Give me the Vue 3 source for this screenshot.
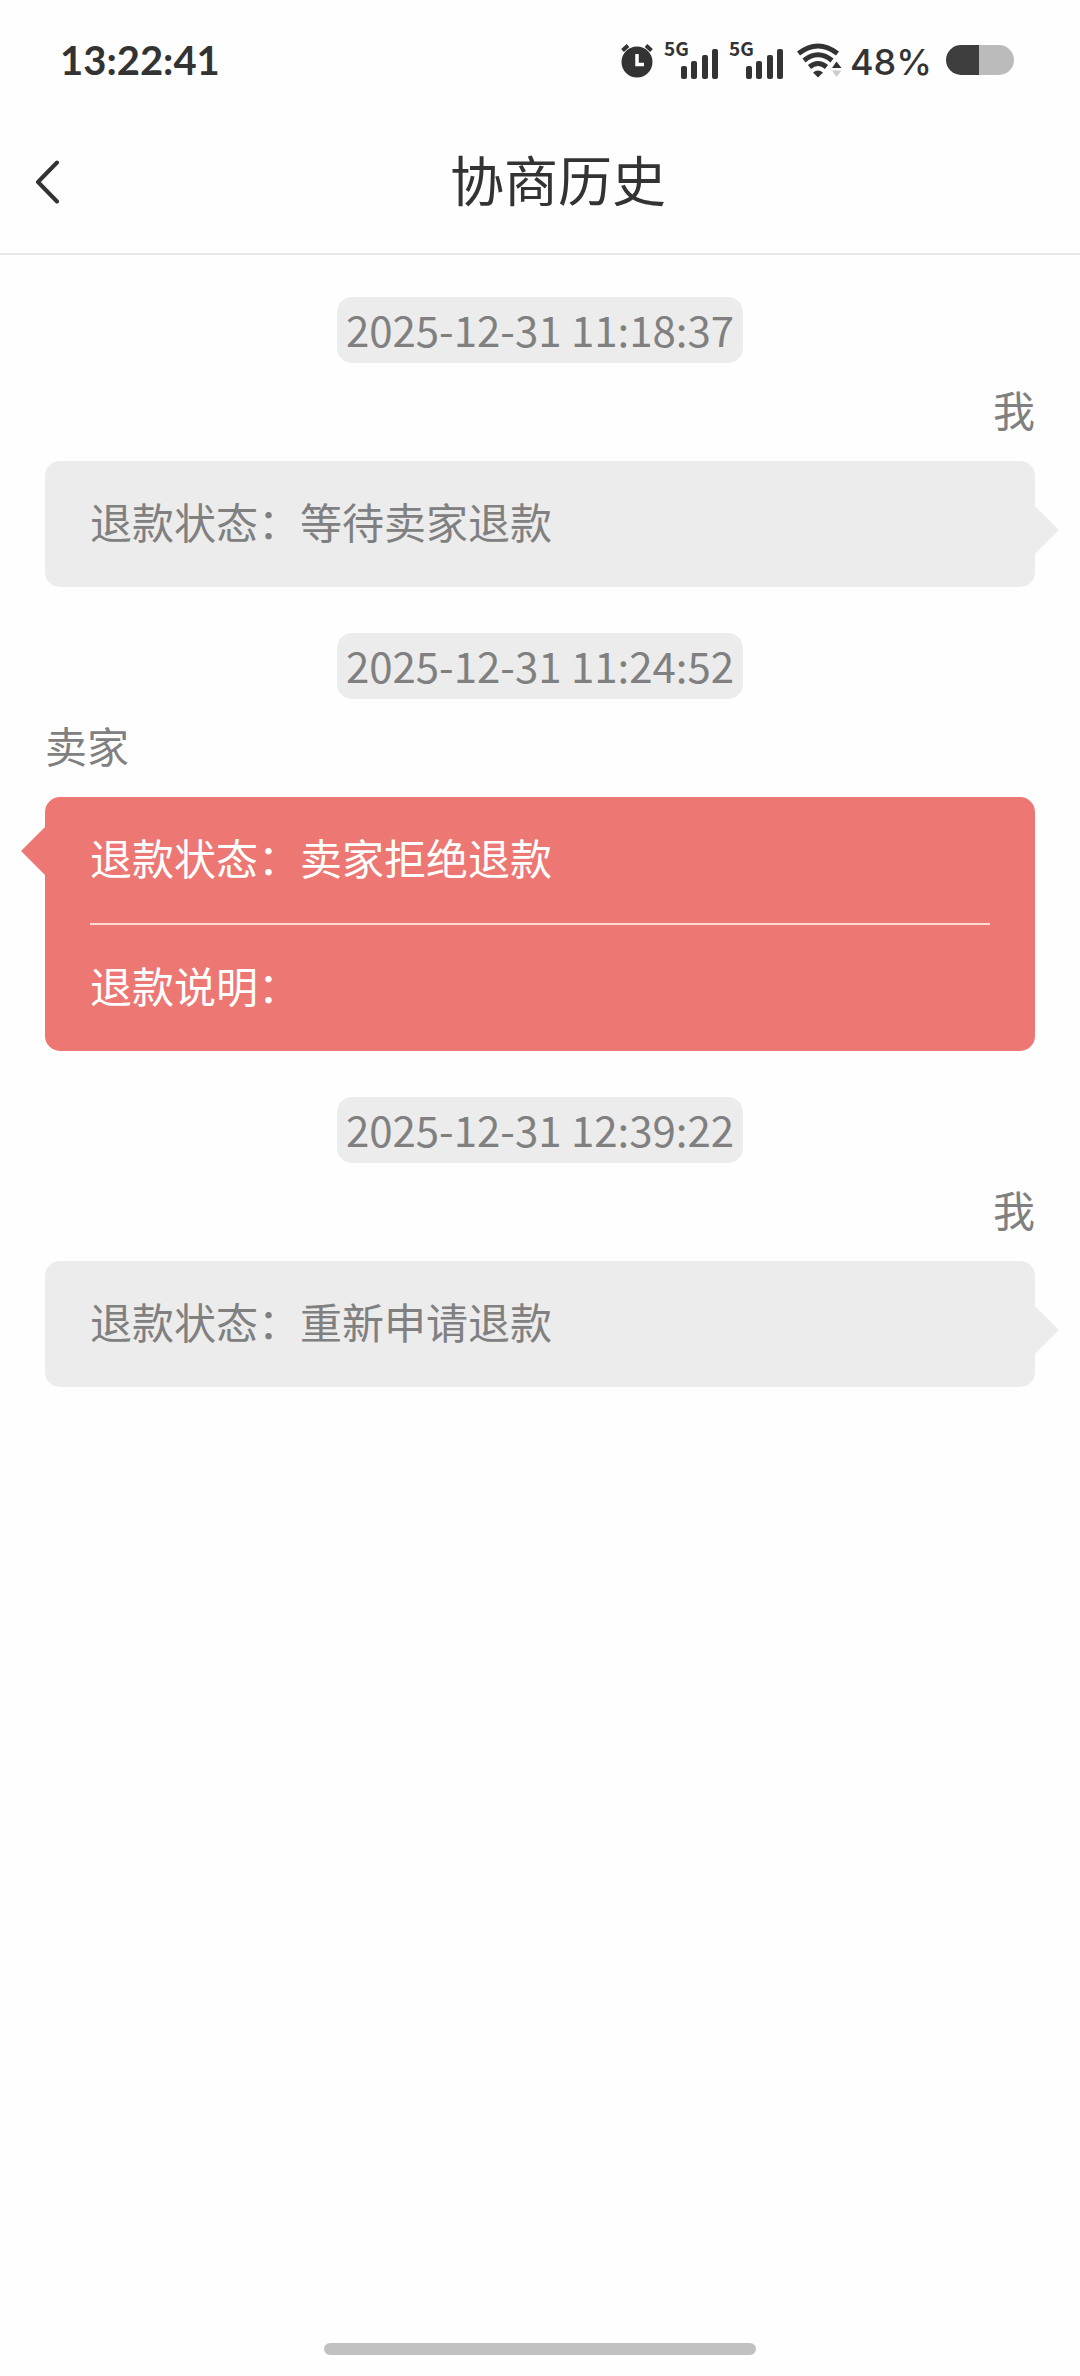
<script setup>
const entries = [
  {
    time: '2025-12-31 11:18:37',
    who: '我',
    side: 'me',
    rows: ['退款状态：等待卖家退款'],
  },
  {
    time: '2025-12-31 11:24:52',
    who: '卖家',
    side: 'seller',
    rows: ['退款状态：卖家拒绝退款', '退款说明：'],
  },
  {
    time: '2025-12-31 12:39:22',
    who: '我',
    side: 'me',
    rows: ['退款状态：重新申请退款'],
  },
]
</script>

<template>
  <div class="page">
    <div class="status">
      <span class="clock">13:22:41</span>
      <div class="indicators">
        <svg class="alarm" width="34" height="36" viewBox="0 0 34 36" aria-hidden="true">
          <circle cx="17" cy="20" r="15.5" fill="#333" />
          <path d="M2.5 8.5 8 3.5M31.5 8.5 26 3.5" stroke="#333" stroke-width="4" fill="none" />
          <path d="M17 12v10.500h7" stroke="#fff" stroke-width="3.500" fill="none" />
        </svg>
        <svg v-for="n in 2" :key="n" class="signal" width="55" height="60" viewBox="0 -10 55 60" aria-hidden="true">
          <text class="net" x="0" y="16">5G</text>
          <rect x="17" y="26" width="6" height="13" rx="2" fill="#333" />
          <rect x="27" y="21" width="6" height="18" rx="2" fill="#333" />
          <rect x="38" y="15" width="6" height="24" rx="2" fill="#333" />
          <rect x="48" y="9" width="6" height="30" rx="2" fill="#333" />
        </svg>
        <svg class="wifi" width="45" height="36" viewBox="0 0 45 36" aria-hidden="true">
          <g stroke="#333" stroke-width="5" fill="none">
            <path d="M1.500 11.500Q21 -3.500 40.500 11.500" />
            <path d="M7 18.500Q21 7 35 18.500" />
            <path d="M12.500 25Q21 18 29.500 25" />
          </g>
          <path d="M16 30.500Q21 26.500 26 30.500L21 35.500Z" fill="#333" />
          <path d="M35 26 39.500 19.500 44.500 26Z" fill="#333" />
          <path d="M35 28.500H44.500L39.500 35Z" fill="#ccc" />
        </svg>
        <span class="percent">48%</span>
        <span class="battery"></span>
      </div>
    </div>

    <header class="bar">
      <button class="back" type="button" aria-label="返回">
        <svg width="26" height="44" viewBox="0 0 26 44" aria-hidden="true">
          <path d="M22 2.500 3 22 22 41.500" fill="none" stroke="#333" stroke-width="4" stroke-linecap="round" stroke-linejoin="round" />
        </svg>
      </button>
      <h1 class="title">协商历史</h1>
    </header>

    <main class="history">
      <section v-for="e in entries" :key="e.time" class="entry" :class="e.side">
        <time class="stamp">{{ e.time }}</time>
        <p class="who">{{ e.who }}</p>
        <div class="bubble">
          <p v-for="row in e.rows" :key="row" class="row">{{ row }}</p>
        </div>
      </section>
    </main>

    <div class="home"></div>
  </div>
</template>

<style>
body {
  margin: 0;
  background: #fefefe;
}
</style>

<style scoped>
.page {
  display: flex;
  flex-direction: column;
  min-height: 100vh;
  background: #fefefe;
  color: #808080;
  font-family: "Noto Sans CJK SC", sans-serif;
  font-size: 42px;
  line-height: 60px;
}

.status {
  display: flex;
  align-items: center;
  justify-content: space-between;
  box-sizing: border-box;
  height: 110px;
  padding: 10px 66px 0 60px;
  color: #333;
}

.clock {
  font-family: Lato, sans-serif;
  font-size: 40px;
  font-weight: 700;
}

.indicators {
  display: flex;
  align-items: center;
}

.signal {
  margin-left: 10px;
}

.net {
  font-family: "Noto Sans CJK SC", sans-serif;
  font-size: 19px;
  font-weight: 700;
  fill: #333;
}

.wifi {
  margin-left: 13px;
}

.percent {
  margin-left: 8px;
  padding-top: 4px;
  font-family: Inter, sans-serif;
  font-size: 36px;
  font-weight: 500;
}

.battery {
  width: 68px;
  height: 30px;
  margin-left: 14px;
  border-radius: 15px;
  background: linear-gradient(to right, #3e3e3e 48%, #bbb 48%);
}

.bar {
  display: flex;
  align-items: center;
  height: 143px;
  padding-right: 36px;
  border-bottom: 2px solid #e8e8e8;
}

.back {
  display: flex;
  align-items: center;
  box-sizing: border-box;
  width: 72px;
  height: 100%;
  padding: 0 0 0 35px;
  border: 0;
  background: none;
}

.title {
  flex: 1;
  margin: 0;
  padding-bottom: 6px;
  color: #333;
  font-size: 54px;
  font-weight: 400;
  line-height: 80px;
  text-align: center;
}

.history {
  display: flex;
  flex: 1;
  flex-direction: column;
  gap: 46px;
  padding: 42px 45px;
}

.entry {
  display: flex;
  flex-direction: column;
}

.stamp {
  align-self: center;
  padding: 2px 9px 4px;
  border-radius: 15px;
  background: #ececec;
}

.who {
  margin: 16px 0 22px;
}

.me .who {
  text-align: right;
}

.bubble {
  position: relative;
  padding: 0 45px;
  border-radius: 15px;
  background: #ececec;
}

.bubble::after {
  content: "";
  position: absolute;
  top: 45px;
  left: 100%;
  width: 24px;
  height: 48px;
  background: #ececec;
  clip-path: polygon(0 0, 100% 50%, 0 100%);
}

.seller .bubble {
  background: #ed7773;
  color: #fff;
}

.seller .bubble::after {
  top: 30px;
  right: 100%;
  left: auto;
  background: #ed7773;
  clip-path: polygon(100% 0, 0 50%, 100% 100%);
}

.row {
  margin: 0;
  padding: 30px 0 36px;
}

.row + .row {
  border-top: 2px solid #fbdcd0;
}

.home {
  align-self: center;
  width: 40%;
  height: 12px;
  margin-bottom: 21px;
  border-radius: 6px;
  background: #c1c1c1;
}
</style>
